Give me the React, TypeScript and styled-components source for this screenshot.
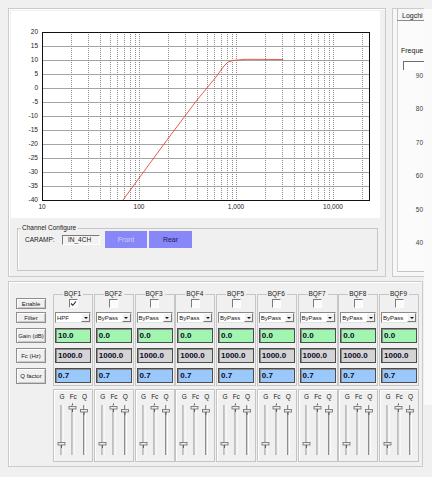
import React from "react";
import styled, { createGlobalStyle } from "styled-components";

const GlobalStyle = createGlobalStyle`
  html, body { margin: 0; padding: 0; background: #f0f0f0; }
  body {
    font-family: "Liberation Sans", Arial, sans-serif;
    font-size: 6.5px;
    color: #202020;
  }
  *, *::before, *::after { box-sizing: border-box; }
`;

const LINE = "#c6c6c6";

// chart geometry (inside the white box)
const X0 = 31, X1 = 358, Y0 = 21, Y1 = 189;
const DEC = 97;
const fx = (f: number) => X0 + DEC * Math.log10(f / 10);
const dy = (db: number) => Y0 + (20 - db) * 2.8;
const px = (v: number) => Math.round(v) + 0.5;

const gridX: number[] = [];
[10, 100, 1000, 10000].forEach((d) => {
  for (let m = 1; m <= 9; m++) {
    const x = fx(d * m);
    if (x > X0 + 1 && x < X1 - 1) gridX.push(px(x));
  }
});
const dbSteps = [20, 15, 10, 5, 0, -5, -10, -15, -20, -25, -30, -35, -40];
const freqLabels: [number, string][] = [[10, "10"], [100, "100"], [1000, "1,000"], [10000, "10,000"]];
const curve = "112,189 156,129 186,89 205,66 213,55 217,51 222,49.5 234,48.3 272,48.5";

const Screen = styled.div`
  width: 432px;
  height: 477px;
  display: flex;
  overflow: hidden;
`;

const Main = styled.div`
  width: 424px;
  flex: none;
  overflow: hidden;
  padding: 8px 0 0 8px;
  display: flex;
  flex-direction: column;
`;

const EdgeStrip = styled.div`
  flex: 1;
  margin-top: 9px;
  height: 396px;
  background: #fafafa;
`;

const TopRow = styled.div`
  display: flex;
  gap: 6px;
  height: 269px;
  flex: none;
`;

const LeftPanel = styled.div`
  width: 378px;
  flex: none;
  border: 1px solid #cbcbcb;
  box-shadow: inset 1px 1px 0 #fff;
  padding: 2px;
  display: flex;
  flex-direction: column;
`;

const ChartBox = styled.div`
  width: 369px;
  height: 207px;
  flex: none;
  background: #fff;
  svg { display: block; }
`;

const GroupTitle = styled.div<{ $h: number; $lead?: number }>`
  display: flex;
  height: ${(p) => p.$h}px;
  line-height: ${(p) => p.$h}px;
  white-space: nowrap;
  &::before, &::after {
    content: "";
    align-self: flex-end;
    height: ${(p) => p.$h / 2}px;
    border-top: 1px solid ${LINE};
  }
  &::before {
    border-left: 1px solid ${LINE};
    ${(p) => (p.$lead !== undefined ? `width: ${p.$lead}px; flex: none;` : "flex: 1;")}
  }
  &::after {
    border-right: 1px solid ${LINE};
    flex: 1;
  }
  span { padding: 0 2px 0 1px; }
`;

const ChannelGroup = styled.div`
  width: 361px;
  margin: 7px 0 0 6px;
`;

const ChannelBody = styled.div`
  height: 40px;
  border: 1px solid ${LINE};
  border-top: none;
  box-shadow: inset 1px 0 0 #fff;
  padding-left: 7px;
  display: flex;
  align-items: flex-start;
`;

const CarampLabel = styled.div`
  width: 37px;
  line-height: 17px;
  font-size: 6.5px;
`;

const FieldBox = styled.div`
  width: 38px;
  height: 10px;
  margin-top: 4px;
  border: 1px solid;
  border-color: #7a7a7a #fff #fff #7a7a7a;
  background: #f3f3f3;
  padding-left: 5px;
  line-height: 8px;
  font-size: 6.5px;
`;

const ModeButton = styled.div<{ $dim?: boolean; $w: number; $ml: number }>`
  width: ${(p) => p.$w}px;
  height: 17px;
  margin-left: ${(p) => p.$ml}px;
  background: #8787f7;
  color: ${(p) => (p.$dim ? "#d2d2ff" : "#1c1c52")};
  display: flex;
  align-items: center;
  justify-content: center;
  font-size: 7px;
`;

const RightPanel = styled.div`
  flex: 1;
  border: 1px solid #cbcbcb;
  border-right: none;
  background: #f7f7f7;
  display: flex;
  flex-direction: column;
  min-width: 0;
`;

const TabStrip = styled.div`
  height: 15px;
  margin-left: 4px;
  border-bottom: 1px solid #8a8a8a;
  display: flex;
  align-items: flex-end;
`;

const Tab = styled.div`
  height: 11px;
  border-left: 1px solid #c2c2c2;
  padding-left: 4px;
  line-height: 13px;
  white-space: nowrap;
  font-size: 7px;
`;

const TabPage = styled.div`
  flex: 1;
  margin: 0 0 8px 4px;
  border-left: 1px solid #d2d2d2;
  border-bottom: 1px solid #c4c4c4;
  background: #fbfbfb;
  padding-left: 3px;
  display: flex;
  flex-direction: column;
`;

const FieldLabel = styled.div`
  margin-top: 25px;
  line-height: 9px;
  white-space: nowrap;
  font-size: 7px;
`;

const InputStub = styled.div`
  margin: 6px 0 0 2px;
  width: 40px;
  height: 9px;
  flex: none;
  border-top: 1px solid #6e6e6e;
  border-left: 1px solid #6e6e6e;
  background: #fff;
`;

const AxisColumn = styled.div`
  margin-top: 1px;
  padding-right: 1px;
  display: flex;
  flex-direction: column;
  align-items: flex-end;
`;

const AxisTick = styled.div`
  height: 33.4px;
  line-height: 9px;
  color: #3e3e3e;
  font-size: 6.5px;
`;

const BottomPanel = styled.div`
  margin-top: 4px;
  width: 415px;
  height: 186px;
  flex: none;
  border: 1px solid #cbcbcb;
  box-shadow: inset 1px 1px 0 #fff;
  padding: 8px 0 0 7px;
  display: flex;
  gap: 7px;
`;

const SideColumn = styled.div`
  width: 30px;
  padding-top: 8px;
  display: flex;
  flex-direction: column;
`;

const SideButton = styled.div<{ $h: number; $mt: number }>`
  height: ${(p) => p.$h}px;
  margin-top: ${(p) => p.$mt}px;
  border: 1px solid #8e8e8e;
  box-shadow: inset 1px 1px 0 #fff, inset -1px -1px 0 #cacaca;
  background: #f0f0f0;
  display: flex;
  align-items: center;
  justify-content: center;
  white-space: nowrap;
  font-size: 6px;
`;

const Bands = styled.div`
  display: flex;
  gap: 0.75px;
`;

const Band = styled.div`
  width: 40px;
  display: flex;
  flex-direction: column;
`;

const BandBody = styled.div`
  border: 1px solid ${LINE};
  border-top: none;
  padding: 0 1px 2px;
  display: flex;
  flex-direction: column;
`;

const CheckRow = styled.div`
  height: 11px;
  display: flex;
  align-items: center;
  justify-content: center;
`;

const CheckBox = styled.div`
  width: 9px;
  height: 9px;
  border: 1px solid;
  border-color: #7c7c7c #fff #fff #7c7c7c;
  background: #fbfbfb;
  svg { display: block; }
`;

const Select = styled.div`
  height: 11px;
  margin-top: 3px;
  border: 1px solid;
  border-color: #8a8a8a #e2e2e2 #e2e2e2 #8a8a8a;
  background: #fff;
  display: flex;
  align-items: center;
`;

const SelectText = styled.div`
  flex: 1;
  padding-left: 1px;
  font-size: 6px;
  white-space: nowrap;
  overflow: hidden;
`;

const SelectArrow = styled.div`
  width: 9px;
  height: 9px;
  flex: none;
  background: #f0f0f0;
  border: 1px solid;
  border-color: #fff #7a7a7a #7a7a7a #fff;
  display: flex;
  align-items: center;
  justify-content: center;
  &::after {
    content: "";
    border-left: 2px solid transparent;
    border-right: 2px solid transparent;
    border-top: 2.5px solid #111;
  }
`;

const ValueBox = styled.div<{ $bg: string }>`
  height: 15px;
  margin-top: 5px;
  background: ${(p) => p.$bg};
  border: 1px solid #4c4c4c;
  box-shadow: inset 1px 1px 0 #8c8c8c;
  padding-left: 2px;
  line-height: 13px;
  font-weight: bold;
  font-size: 8px;
  color: #0a0a2a;
  white-space: nowrap;
  overflow: hidden;
`;

const SliderBox = styled.div`
  margin-top: 3px;
  height: 73px;
  border: 1px solid #c4c4c4;
  box-shadow: inset 1px 1px 0 #fff;
  svg { display: block; }
`;

const FaderLabels = styled.div`
  height: 12px;
  padding-left: 3px;
  display: flex;
  gap: 1.25px;
  align-items: center;
  span {
    width: 10px;
    text-align: center;
    font-size: 6.5px;
  }
`;

const sideRows: [string, number, number][] = [
  ["Enable", 11, 0],
  ["Filter", 11, 3],
  ["Gain (dB)", 15, 5],
  ["Fc (Hz)", 15, 5],
  ["Q factor", 16, 5],
];

const bands = Array.from({ length: 9 }, (_, i) => ({
  name: `BQF${i + 1}`,
  enabled: i === 0,
  filter: i === 0 ? "HPF" : "ByPass",
  gain: i === 0 ? "10.0" : "0.0",
  fc: "1000.0",
  q: "0.7",
}));

const ResponseChart = () => (
  <svg width={369} height={207} viewBox="0 0 369 207">
    {dbSteps.slice(1, -1).map((db) => (
      <line key={db} x1={X0} x2={X1} y1={px(dy(db))} y2={px(dy(db))} stroke="#a4a4a4" />
    ))}
    {gridX.map((x, i) => (
      <line key={i} x1={x} x2={x} y1={Y0} y2={Y1} stroke="#8e8e8e" strokeDasharray="1 1" />
    ))}
    <rect x={X0 + 0.5} y={Y0 + 0.5} width={X1 - X0} height={Y1 - Y0} fill="none" stroke="#111" />
    <polyline points={curve} fill="none" stroke="#e2483f" strokeWidth={0.9} />
    {dbSteps.map((db) => (
      <text key={db} x={27} y={dy(db) + 2.2} textAnchor="end" fontSize={6.5}
        fontFamily="Liberation Sans, Arial, sans-serif" fill="#222">{db}</text>
    ))}
    {freqLabels.map(([f, t]) => (
      <text key={t} x={fx(f)} y={198} textAnchor="middle" fontSize={6.5}
        fontFamily="Liberation Sans, Arial, sans-serif" fill="#222">{t}</text>
    ))}
  </svg>
);

const Fader = ({ x, y, tick }: { x: number; y: number; tick?: boolean }) => (
  <g>
    <line x1={x - 0.5} x2={x - 0.5} y1={3} y2={53} stroke="#8c8c8c" />
    <line x1={x + 0.5} x2={x + 0.5} y1={3} y2={53} stroke="#d6d6d6" />
    <line x1={x + 1.5} x2={x + 1.5} y1={3} y2={53} stroke="#fff" />
    {tick && <line x1={x} x2={x} y1={y - 4.5} y2={y - 3} stroke="#555" />}
    <rect x={x - 3.5} y={y - 1.5} width={7} height={2.5} fill="#ececec" stroke="#6c6c6c" strokeWidth={0.8} />
    <line x1={x} x2={x} y1={y + 1} y2={y + 4} stroke="#555" strokeWidth={0.9} />
  </g>
);

const FaderSet = () => (
  <svg width={38} height={59} viewBox="0 0 38 59">
    <Fader x={7.5} y={42} />
    <Fader x={18.5} y={6} tick />
    <Fader x={30} y={9} />
  </svg>
);

const Check = () => (
  <svg width={7} height={7} viewBox="0 0 7 7">
    <polyline points="1,3.5 2.8,5.3 6,1.5" fill="none" stroke="#222" strokeWidth={1.1} />
  </svg>
);

export default function App() {
  return (
    <>
      <GlobalStyle />
      <Screen>
        <Main>
          <TopRow>
            <LeftPanel>
              <ChartBox>
                <ResponseChart />
              </ChartBox>
              <ChannelGroup>
                <GroupTitle $h={6} $lead={4}>
                  <span>Channel Configure</span>
                </GroupTitle>
                <ChannelBody>
                  <CarampLabel>CARAMP:</CarampLabel>
                  <FieldBox>IN_4CH</FieldBox>
                  <ModeButton $dim $w={42} $ml={5}>Front</ModeButton>
                  <ModeButton $w={43} $ml={2}>Rear</ModeButton>
                </ChannelBody>
              </ChannelGroup>
            </LeftPanel>
            <RightPanel>
              <TabStrip>
                <Tab>Logchi</Tab>
              </TabStrip>
              <TabPage>
                <FieldLabel>Freque</FieldLabel>
                <InputStub />
                <AxisColumn>
                  {[90, 80, 70, 60, 50, 40].map((v) => (
                    <AxisTick key={v}>{v}</AxisTick>
                  ))}
                </AxisColumn>
              </TabPage>
            </RightPanel>
          </TopRow>

          <BottomPanel>
            <SideColumn>
              {sideRows.map(([label, h, mt]) => (
                <SideButton key={label} $h={h} $mt={mt}>{label}</SideButton>
              ))}
            </SideColumn>
            <Bands>
              {bands.map((b) => (
                <Band key={b.name}>
                  <GroupTitle $h={8}>
                    <span>{b.name}</span>
                  </GroupTitle>
                  <BandBody>
                    <CheckRow>
                      <CheckBox>{b.enabled && <Check />}</CheckBox>
                    </CheckRow>
                    <Select>
                      <SelectText>{b.filter}</SelectText>
                      <SelectArrow />
                    </Select>
                    <ValueBox $bg="#a2f5b0">{b.gain}</ValueBox>
                    <ValueBox $bg="#d4d4d4">{b.fc}</ValueBox>
                    <ValueBox $bg="#9ac8fa">{b.q}</ValueBox>
                  </BandBody>
                  <SliderBox>
                    <FaderLabels>
                      <span>G</span>
                      <span>Fc</span>
                      <span>Q</span>
                    </FaderLabels>
                    <FaderSet />
                  </SliderBox>
                </Band>
              ))}
            </Bands>
          </BottomPanel>
        </Main>
        <EdgeStrip />
      </Screen>
    </>
  );
}
